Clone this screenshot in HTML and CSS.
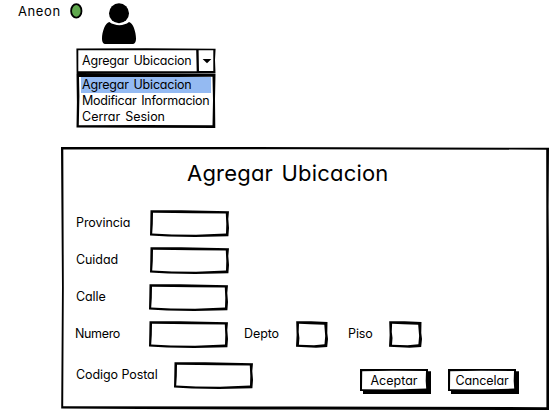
FILE: index.html
```html
<!DOCTYPE html>
<html lang="es">
<head>
<meta charset="utf-8">
<title>Agregar Ubicacion</title>
<link rel="stylesheet" href="styles.css">
</head>
<body>
<svg class="defs" aria-hidden="true">
  <symbol id="field" viewBox="0 0 79 27" preserveAspectRatio="none">
    <path d="M0.5 0.2 L31 0.3 L79 1.2 L78.3 9 L79 18 L78.4 26.3 L45 26.9 L18 26.4 L0 25.5 L0.3 13Z M3 2.8 L2.8 14 L2.2 23.4 L22 24.4 L46 24.7 L76 23.5 L76.3 14 L75.8 3.6 L43 3.2 L24 3Z" fill-rule="evenodd"/>
  </symbol>
  <symbol id="small-field" viewBox="0 0 32 27" preserveAspectRatio="none">
    <path d="M0.2 0.2 L15 0.3 L31.5 1 L31.3 12 L32 18 L31.2 26 L20 26.8 L0 25.7 L0.6 14Z M3 2.8 L2.7 11 L3.4 17 L2.9 23.8 L18 24.3 L28.5 23.3 L29.2 15 L28.3 3.7 L14 3.3Z" fill-rule="evenodd"/>
  </symbol>
  <symbol id="button" viewBox="0 0 71 25" preserveAspectRatio="none">
    <path d="M68 2.3H71V25H3V22H0V0H68Z"/>
    <path d="M2.2 2.3 L33 1.7 L66 2 L65.7 12 L66.2 19.6 L34 20.6 L2 20.2Z" fill="#fff"/>
  </symbol>
</svg>
<header class="top">
  <div class="user">
    <span class="name">Aneon</span>
    <svg class="status" viewBox="0 0 13 16"><ellipse cx="6.3" cy="7.9" rx="5.2" ry="6.7" fill="#5fa84d" stroke="#000" stroke-width="1.8"/></svg>
    <svg class="avatar" viewBox="0 0 34 42"><circle cx="17" cy="10.2" r="10"/><path d="M7.3 19 C13 23.2 22 23.2 27 19 C31 19.8 34 29 34 35.5 C34 39 33 41 30 41 H4 C1 41 0 39 0 35.5 C0 29 3.2 19.8 7.3 19Z"/></svg>
  </div>
  <div class="combo">
    <svg class="frame" viewBox="0 0 140 26"><path d="M0.4 0.5 L70 0.2 L139.6 0.8 L139 12 L139.5 25.5 L0.6 26Z M2.3 2.2 V23.2 L120.7 23.3 L120.2 2.2Z M122.6 2.2 L123 23 L137.3 23 V2.3Z" fill-rule="evenodd"/><path d="M126.6 11 H135.4 L131 15.3Z"/></svg>
    <span class="combo-text">Agregar Ubicacion</span>
  </div>
  <div class="list">
    <svg class="frame" viewBox="0 0 140 54"><path d="M0.5 0 H139.5 L139 25 L139.3 54 L70 53.8 L0.5 53.6 L0.9 28Z M3 3 L3.4 22 L2.8 51.2 L70 51.1 L136.5 51.3 L137 26 L136.5 2.7 L60 3.2Z" fill-rule="evenodd"/></svg>
    <div class="option selected"><span>Agregar Ubicacion</span></div>
    <div class="option"><span class="wide-item">Modificar Informacion</span></div>
    <div class="option"><span class="loose-item">Cerrar Sesion</span></div>
  </div>
</header>
<main class="panel">
  <svg class="frame" viewBox="0 0 488 263"><path d="M0 0 L160 0 L488 0.8 L487.6 60 L488 120 L488 263 L240 262.6 L80 262 L0.2 261.5 L1 140Z M2.3 2.4 L2.8 140 L2.2 259.2 L240 259.6 L485.4 260.2 L485.4 120 L485.2 2.7 L240 2.2Z" fill-rule="evenodd"/></svg>
  <h1>Agregar Ubicacion</h1>
  <form class="form">
    <div class="row"><label class="main-label">Provincia</label><div class="field"><svg><use href="#field"/></svg></div></div>
    <div class="row"><label class="main-label">Cuidad</label><div class="field"><svg><use href="#field"/></svg></div></div>
    <div class="row shifted"><label class="main-label">Calle</label><div class="field"><svg><use href="#field"/></svg></div></div>
    <div class="row shifted"><label class="main-label num">Numero</label><div class="field"><svg><use href="#field"/></svg></div><label class="depto">Depto</label><div class="field small"><svg><use href="#small-field"/></svg></div><label class="piso">Piso</label><div class="field small wide"><svg><use href="#small-field"/></svg></div></div>
    <div class="row last"><label class="postal">Codigo Postal</label><div class="field"><svg><use href="#field"/></svg></div>
      <div class="actions">
        <button type="button"><svg><use href="#button"/></svg><span>Aceptar</span></button>
        <button type="button" class="cancel"><svg><use href="#button"/></svg><span>Cancelar</span></button>
      </div>
    </div>
  </form>
</main>
</body>
</html>
```
FILE: styles.css
```css
* { box-sizing: border-box; }
body {
  margin: 0;
  width: 549px;
  height: 410px;
  overflow: hidden;
  background: #fff;
  color: #000;
  font: 12.5px/16px Inter, Lato, sans-serif;
  font-feature-settings: "cv11" 1;
  white-space: nowrap;
}
svg { display: block; }
.defs { position: absolute; width: 0; height: 0; }
.frame { position: absolute; inset: 0; width: 100%; height: 100%; }
.top { height: 147px; }
.user { display: flex; height: 48px; padding: 3px 0 0 18px; }
.name { width: 52px; font-size: 13px; letter-spacing: 0.6px; }
.status { width: 13px; height: 16px; }
.avatar { width: 34px; height: 42px; margin-left: 19px; }
.combo, .list { position: relative; width: 140px; margin-left: 76px; }
.combo { height: 26px; padding: 5px 0 0 6px; }
.combo-text, .option span { position: relative; letter-spacing: -0.2px; word-spacing: 1.5px; }
.option .wide-item { letter-spacing: -0.25px; }
.option .loose-item { letter-spacing: 0; }
.list { height: 54px; padding: 3px 5px; }
.option { position: relative; height: 16px; padding-left: 1px; }
.selected { background: #94baf2; }
.panel { position: relative; width: 488px; height: 263px; margin-left: 61px; }
h1 { margin: 0; height: 63px; padding: 10px 0 0 126px; font-size: 22px; font-weight: 400; line-height: 32px; letter-spacing: 0.2px; word-spacing: 2px; }
.form { padding-left: 15px; }
.row { display: flex; align-items: center; height: 27px; margin-bottom: 10px; }
.row label { padding-bottom: 1px; letter-spacing: -0.08px; }
.main-label { width: 74px; }
.shifted .main-label { width: 73px; }
.field { width: 79px; height: 27px; flex: none; }
.field svg { width: 100%; height: 100%; }
.field.small { width: 32px; }
.field.wide { width: 33px; }
.depto { width: 52px; margin-left: 16px; }
.piso { width: 41px; margin-left: 20px; }
.row .num { text-indent: -1px; letter-spacing: -0.35px; }
.row.last { margin-top: 14px; }
.postal { width: 98px; }
.actions { display: flex; gap: 17px; margin: 12px 0 0 107px; }
button { position: relative; width: 71px; height: 25px; padding: 0 3px 2px 0; border: 0; background: none; color: inherit; font: inherit; font-feature-settings: inherit; }
button svg { position: absolute; inset: 0; width: 100%; height: 100%; }
button span { position: relative; }
.cancel { letter-spacing: -0.1px; }
```
